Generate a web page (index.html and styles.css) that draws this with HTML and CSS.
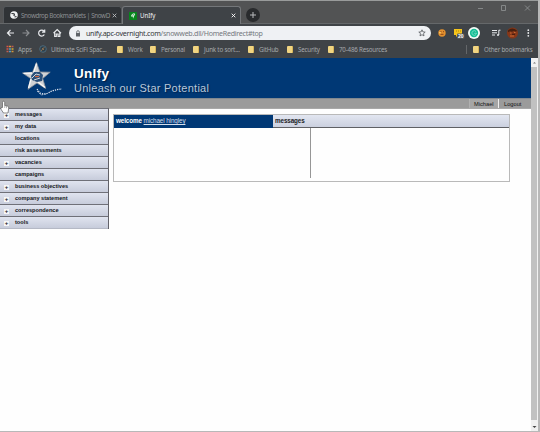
FILE: index.html
```
<!DOCTYPE html>
<html lang="en">
<head>
<meta charset="utf-8">
<title>UnIfy</title>
<link rel="stylesheet" href="styles.css">
</head>
<body>
<div class="window">
  <header class="tabs">
    <div class="tab">
      <svg class="fav" viewBox="0 0 8 8"><circle cx="4" cy="4" r="3.800" fill="#f1f3f4"/><path d="M1.500 2.500l2.500.2.500 1.500-1 .3M4.500 6l2-.5" fill="none" stroke="#303336" stroke-width="1.200"/></svg>
      <span class="tab-name">Snowdrop Bookmarklets | SnowD</span>
      <svg class="close" viewBox="0 0 5 5"><path d="M.7.7l3.600 3.600M4.300.7L.7 4.300"/></svg>
    </div>
    <div class="tab active">
      <svg class="fav" viewBox="0 0 8 8"><rect width="8" height="8" fill="#07851c"/><path d="M2 4.500Q2 2 5 1.200L6.200 2 5 4.500 4 6.800 3.800 4.500z" fill="#dbeee0"/><path d="M3.500 3.200L5 2.500" stroke="#07851c" stroke-width=".7"/></svg>
      <span class="tab-name">UnIfy</span>
      <svg class="close" viewBox="0 0 5 5"><path d="M.7.7l3.600 3.600M4.300.7L.7 4.300"/></svg>
    </div>
    <svg class="new-tab" viewBox="0 0 14 14"><circle cx="7" cy="7" r="7" fill="#292b2d"/><path d="M7 4v6M4 7h6" stroke="#b8babc" stroke-width="1"/></svg>
    <svg class="controls" viewBox="0 0 54 10"><path d="M1 5.500h5M24.500 2.500h4v5h-4zM48 2.500l5 5M53 2.500l-5 5" fill="none" stroke="#929496" stroke-width=".8"/></svg>
  </header>
  <nav class="toolbar">
    <svg class="nav-icons" viewBox="0 0 56 10" fill="none" stroke="#e8eaed" stroke-width="1.200">
      <path d="M8 5H1.500M4.500 2L1.500 5l3 3"/>
      <path d="M16.500 5h6.500M20 2l3 3-3 3" stroke="#8b8e91"/>
      <path d="M38 3.200A3 3 0 1 0 38.300 6.500M38.700 1.500v2.600H36"/>
      <path d="M47.500 5.200L51.200 1.500 55 5.200M48.700 4.500v4h1.600V6h1.800v2.500h1.700v-4"/>
    </svg>
    <div class="address">
      <svg class="lock" viewBox="0 0 6 7"><path d="M1 3h4v3.500H1z" fill="#5f6368"/><path d="M1.700 3V2a1.300 1.300 0 0 1 2.600 0v1" fill="none" stroke="#5f6368" stroke-width=".8"/></svg>
      <span class="url">unify.apc-overnight.com<i>/snowweb.dll/HomeRedirect#top</i></span>
      <svg class="fave" viewBox="0 0 8 8"><path d="M4 .8l.9 2.100 2.300.2-1.700 1.500.5 2.300L4 5.700 2 6.900l.5-2.300L.8 3.100l2.300-.2z" fill="none" stroke="#55595d" stroke-width=".8"/></svg>
    </div>
    <svg class="extensions" viewBox="0 0 100 14">
      <circle cx="7" cy="7" r="3.700" fill="#e4912e"/><path d="M5.500 5.700h1M8 5.700h1M5.500 8.300h3" stroke="#8a451b" stroke-width="1"/><circle cx="5" cy="6.800" r=".8" fill="#ffe082"/>
      <path d="M19 3h8v6h-4l-2 2V9h-2z" fill="#f6c51c"/><path d="M21 5h1M23 5h1M25 5h1" stroke="#9b760d" stroke-width=".8"/>
      <rect x="22" y="7.500" width="7.500" height="5.500" rx="1" fill="#535659"/><text x="25.700" y="12" class="badge">20</text>
      <circle cx="39" cy="7" r="6" fill="#f4fbf8"/><circle cx="39" cy="7" r="4.200" fill="#17bd96"/><path d="M41 5.500a2.300 2.300 0 1 0 0 3M39.200 7.300H42" fill="none" stroke="#80dfc7" stroke-width=".8"/>
      <path d="M57 4.500h5M57 6.800h5M57 9h3M63.800 9V4.200h1.700" fill="none" stroke="#e8eaed" stroke-width="1"/><circle cx="63" cy="9" r="1" fill="#e8eaed"/>
      <circle cx="77.500" cy="7" r="5.500" fill="#873718"/><path d="M73 4.500q4-4 9 0l-1 1.300-2-1-2 1-2-.5-2 1z" fill="#47200f"/><path d="M75 7h1.500M79 6.500h1.500M75 10h4" stroke="#ca6931" stroke-width="1.200"/><path d="M77 8.300h3" stroke="#3c1a10" stroke-width="1"/>
      <g fill="#e8eaed"><circle cx="93.300" cy="4.200" r=".9"/><circle cx="93.300" cy="7" r=".9"/><circle cx="93.300" cy="9.800" r=".9"/></g>
    </svg>
  </nav>
  <nav class="bookmarks">
    <span class="mark apps"><svg viewBox="0 0 8 8"><path d="M.5 1.500h2M.5 4h2" stroke="#d95548" stroke-width="1.700"/><path d="M3 1.500h2M5.500 6.500h2" stroke="#d5973a" stroke-width="1.700"/><path d="M5.500 1.500h2M.5 6.500h2" stroke="#bd5e50" stroke-width="1.700"/><path d="M3 4h2M3 6.500h2" stroke="#4d9ac9" stroke-width="1.700"/><path d="M5.500 4h2" stroke="#c2a33c" stroke-width="1.700"/></svg>Apps</span>
    <span class="mark scifi"><svg viewBox="0 0 8 8"><circle cx="4" cy="4" r="3.300" fill="#303f49" stroke="#50758a" stroke-width=".8"/><path d="M2 6l3.500-4M3 3l2 2" stroke="#a17a50" stroke-width=".8"/></svg>Ultimate SciFi Spac...</span>
    <span class="mark"><b></b>Work</span>
    <span class="mark"><b></b>Personal</span>
    <span class="mark"><b></b>Junk to sort...</span>
    <span class="mark"><b></b>GitHub</span>
    <span class="mark"><b></b>Security</span>
    <span class="mark"><b></b>70-486 Resources</span>
    <span class="mark other"><b></b>Other bookmarks</span>
  </nav>
  <div class="viewport">
    <div class="page">
      <header class="banner">
        <svg class="logo" viewBox="0 0 46 40">
          <path d="M16.500 4.500l3.400 9.500 10.300.2-7.500 6.300 3 10-8.700-5.500-9 6.300 2.700-10.800L2.500 15l10-.7z" fill="#d0d2d5" stroke="#8a9098" stroke-width=".8"/>
          <path d="M16.500 5.500l-3 9.500M12 15L3.500 15.300M11 21l-2.500 9M18 24l7 5.500" stroke="#f8f8f8" stroke-width="1.300"/>
          <path d="M14 14h6l3 3-1 6-5 1-5-2-1-4z" fill="#294f7a"/><path d="M12 20l4-4 4 1M14 22l6-2" fill="none" stroke="#d4d8de" stroke-width="1"/><path d="M15 18.500h4" stroke="#cb6543" stroke-width="1.300"/>
          <path d="M17 31l3 4q5 2 9-.5 5-3 13-3.500" fill="none" stroke="#e0e6ef" stroke-width="1.200" stroke-dasharray="1.300 1"/><path d="M17 33l4 4 5-1" fill="none" stroke="#a9bad0" stroke-width=".9" stroke-dasharray="2 1"/>
        </svg>
        <div><h1>UnIfy</h1><p>Unleash our Star Potential</p></div>
      </header>
      <div class="userbar"><a class="user">Michael</a><a class="logout">Logout</a></div>
      <main>
        <ul class="menu">
          <li class="expand">messages</li>
          <li class="expand">my data</li>
          <li>locations</li>
          <li>risk assessments</li>
          <li class="expand">vacancies</li>
          <li>campaigns</li>
          <li class="expand">business objectives</li>
          <li class="expand">company statement</li>
          <li class="expand">correspondence</li>
          <li class="expand">tools</li>
        </ul>
        <section class="panel">
          <div class="panel-head"><div class="welcome">welcome <a>michael hingley</a></div><div class="messages">messages</div></div>
          <div class="panel-body"><div class="left-pane"></div></div>
        </section>
      </main>
      <svg class="cursor" viewBox="0 0 10 14"><path d="M2.500 7V2q0-1.300 1-1.300T4.700 2v3l3 .7q1.300.4 1 2L8 12.500H3.500L.8 8.500Q.5 6.500 2.500 7z" fill="#fff" stroke="#5c5c5c" stroke-width=".7"/><path d="M4.700 5v2.500M6.500 5.700v2" stroke="#777" stroke-width=".5"/></svg>
    </div>
    <div class="scrollbar"><svg viewBox="0 0 7 9"><path d="M2 5.500L3.500 4 5 5.500z" fill="#777"/></svg><div class="thumb"></div><svg class="down" viewBox="0 0 7 11"><path d="M1.500 6h4l-2 2z" fill="#444"/></svg></div>
  </div>
</div>
</body>
</html>
```
FILE: styles.css
```
* { box-sizing: border-box; }
body { margin: 0; width: 540px; height: 432px; overflow: hidden; background: #b8b8b8; font-family: "Liberation Sans", sans-serif; }
svg { display: block; flex: none; }
.window { width: 538px; height: 431px; border-top: 1px solid #999b9b; background: #3f4347; display: flex; flex-direction: column; }
.tabs { height: 23px; flex: none; display: flex; align-items: flex-end; background: #525354; border-bottom: 1px solid #65686a; padding-left: 3px; }
.tab { width: 119px; height: 17px; display: flex; align-items: center; padding: 0 4px 0 6px; background: #303336; border: 1px solid #54575a; border-bottom: 0; border-radius: 3px 3px 0 0; color: #8d9093; font: 6.3px "Noto Sans", sans-serif; }
.tab.active { height: 18px; margin-bottom: -1px; background: #3f4347; border-color: #74777a; color: #f0f1f2; font-size: 6.2px; }
.fav { width: 8px; height: 8px; margin-right: 3px; }
.tab-name { flex: 1; white-space: nowrap; letter-spacing: -.38px; }
.active .tab-name { letter-spacing: -.1px; }
.close { width: 5px; height: 5px; fill: none; stroke: #b9bcbf; stroke-width: .9; }
.active .close { stroke: #fff; }
.new-tab { width: 14px; height: 14px; margin: 0 0 1px 5px; }
.controls { width: 54px; height: 10px; margin: 0 7px 10px auto; }
.toolbar { height: 18px; flex: none; display: flex; align-items: center; padding-left: 6px; }
.nav-icons { width: 56px; height: 10px; margin-right: 7px; }
.address { width: 362px; height: 14px; border-radius: 7px; background: #eff1f4; display: flex; align-items: center; padding: 0 5px 0 6px; }
.lock { width: 6px; height: 7px; margin-right: 5px; }
.url { flex: 1; color: #33363a; font: 7.1px "Noto Sans", sans-serif; letter-spacing: -.27px; white-space: nowrap; }
.url i { color: #74787d; font-style: normal; }
.fave { width: 8px; height: 8px; }
.extensions { width: 100px; height: 14px; margin-left: 4px; }
.badge { font: bold 5px "Liberation Sans", sans-serif; fill: #fff; text-anchor: middle; }
.bookmarks { height: 16px; flex: none; display: grid; grid-template-columns: 33px 78px 33px 43px 55px 39px 41px 138px 65px; align-items: center; padding: 0 0 2px 6px; color: #a6a9ac; font: 6.2px "Noto Sans", sans-serif; letter-spacing: -.18px; }
.mark { display: flex; align-items: center; white-space: nowrap; }
.mark svg { width: 8px; height: 8px; margin-right: 4px; }
.mark b { width: 6px; height: 7px; margin-right: 5px; background: #f1d582; border-right: 1px solid #d8b65a; border-radius: 1px; flex: none; }
.other { border-left: 1px solid #64676a; padding-left: 6px; }
.viewport { flex: 1; display: flex; background: #fefefe; }
.page { width: 531px; position: relative; }
.banner { height: 40px; background: #003875; display: flex; color: #fff; padding: 0 0 0 20px; }
.logo { width: 46px; height: 40px; margin-right: 8px; }
.banner h1 { margin: 8px 0 0; font-size: 13.5px; line-height: 16px; letter-spacing: .3px; text-shadow: 1px 1px 1px #001d40; }
.banner p { margin: -1px 0 0; font-size: 11px; line-height: 14px; letter-spacing: .26px; color: #b8c8da; text-shadow: 1px 1px 1px #00234c; white-space: nowrap; }
.userbar { height: 10px; background: #9b9b9b; border-top: 1px solid #808890; display: flex; justify-content: flex-end; font-size: 5.7px; line-height: 10px; color: #111; }
.user { width: 30px; padding-left: 4px; background: #a5a5a5; border-right: 1px solid #eee; border-left: 1px solid #b0b0b0; }
.logout { width: 32px; padding-left: 5px; }
main { display: flex; align-items: flex-start; border-top: 1px solid #a8a8a8; }
.menu { list-style: none; margin: -1px 0 0; padding: 0; width: 109px; border-right: 1px solid #626269; border-top: 1px solid #6f7078; }
.menu li { height: 12.05px; padding: 0 0 1px 15px; border-bottom: 1px solid #6f7078; background: linear-gradient(#e0e4ef, #c7ccdb); font: bold 5.6px/9px "Liberation Sans", sans-serif; color: #15171b; display: flex; align-items: center; }
.menu li:last-child { border-bottom-color: #b5b9c5; }
.expand::before { content: "+"; width: 5px; height: 5px; margin: 3px 6px 0 -11px; background: #f6f6f6; font-size: 6px; line-height: 5px; text-align: center; }
.panel { width: 397px; height: 68px; margin: 5px 0 0 4px; border: 1px solid #b9b9b9; }
.panel-head { height: 13px; display: flex; border-bottom: 1px solid #5f6064; background: linear-gradient(#e2e6f1, #cbd0df); font: bold 6.3px/12px "Liberation Sans", sans-serif; letter-spacing: -.1px; color: #202126; }
.welcome { width: 159px; height: 13px; padding-left: 2px; background: #003875; color: #fff; }
.welcome a { font-weight: normal; text-decoration: underline; color: #d5dfeb; }
.messages { padding-left: 2px; }
.panel-body { height: 50px; }
.left-pane { width: 197px; height: 50px; border-right: 1px solid #969696; }
.cursor { position: absolute; left: 0; top: 42px; width: 10px; height: 15px; }
.scrollbar { width: 7px; display: flex; flex-direction: column; background: #f1f1f1; }
.scrollbar svg { width: 7px; height: 9px; }
.thumb { flex: 1; background: #c1c1c1; margin-right: 1px; }
.scrollbar .down { height: 11px; }
```
